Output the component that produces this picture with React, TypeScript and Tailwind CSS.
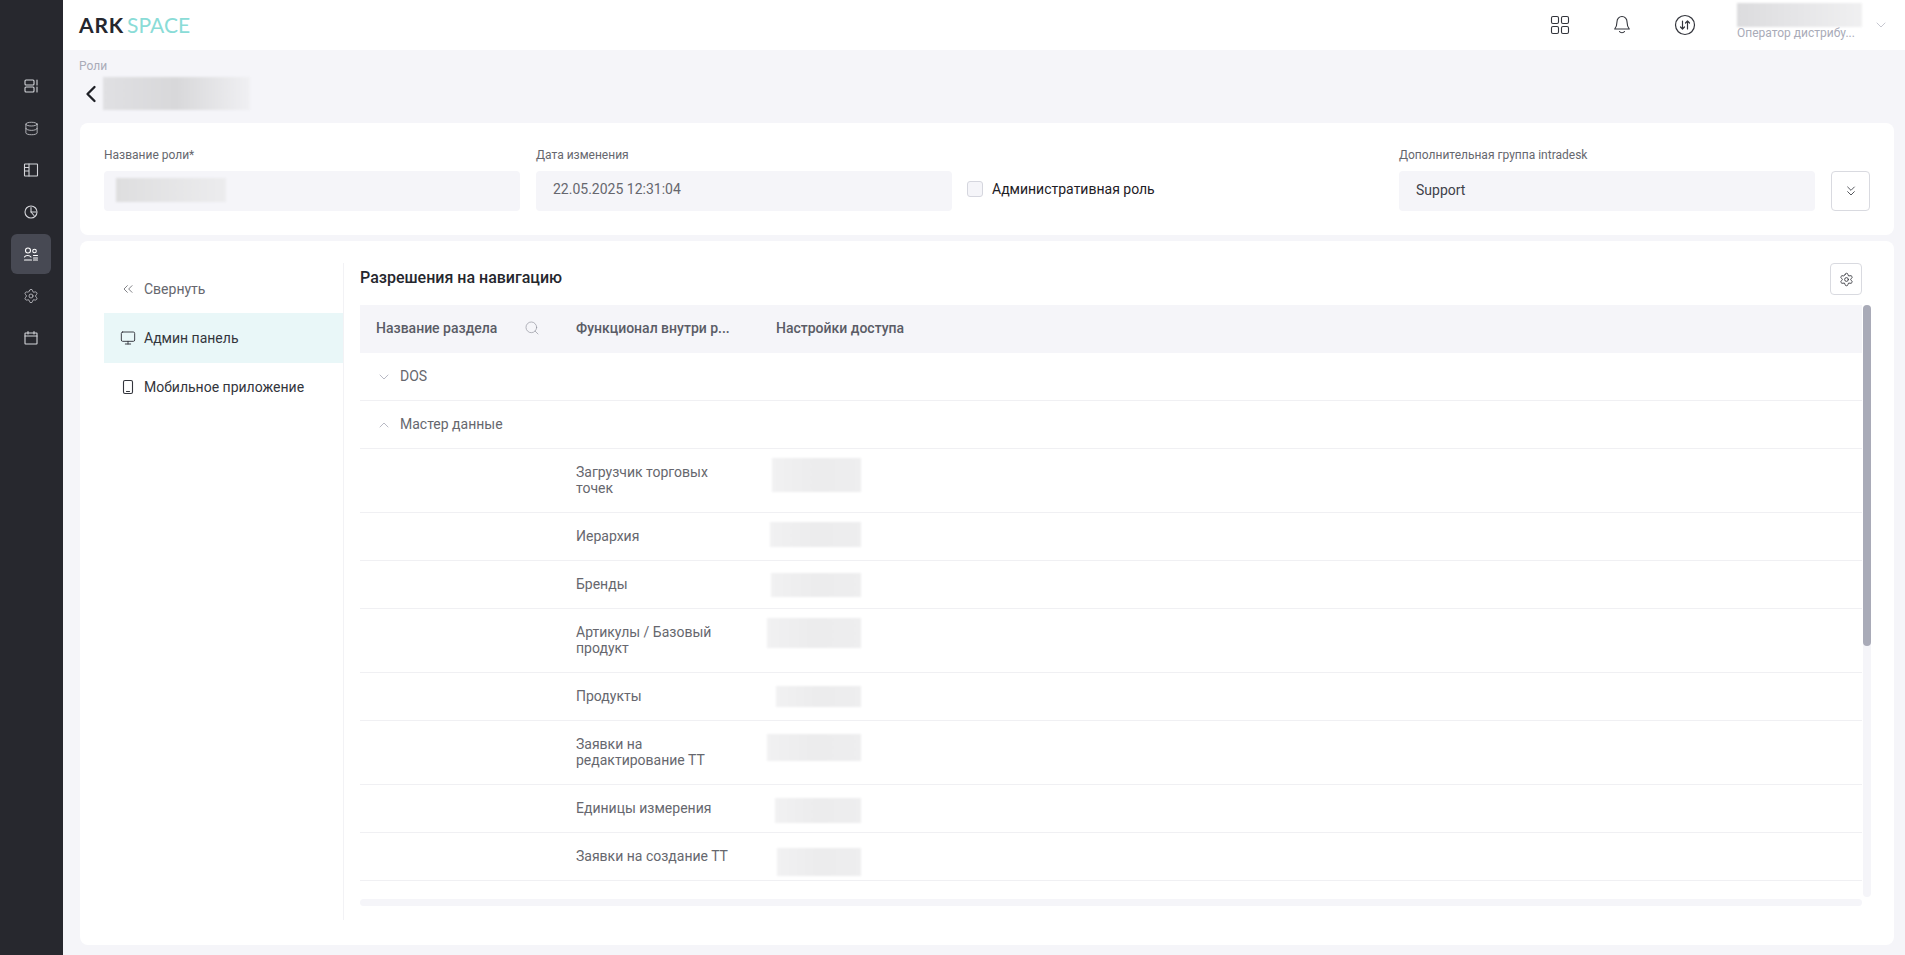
import {
  ChevronDown,
  ChevronLeft,
  ChevronUp,
  ChevronsDown,
  ChevronsLeft,
  Database,
  Monitor,
  Search,
  Settings,
} from "lucide-react";
import type { ReactNode } from "react";

const ROWS = [
  { label: "Загрузчик торговых точек", tall: true, blur: "w-[89px] h-[34px] mt-[9px]" },
  { label: "Иерархия", tall: false, blur: "w-[91px] h-[25px] mt-[9px]" },
  { label: "Бренды", tall: false, blur: "w-[90px] h-[24px] mt-[12px]" },
  { label: "Артикулы / Базовый продукт", tall: true, blur: "w-[94px] h-[30px] mt-[9px]" },
  { label: "Продукты", tall: false, blur: "w-[85px] h-[21px] mt-[13px]" },
  { label: "Заявки на редактирование ТТ", tall: true, blur: "w-[94px] h-[27px] mt-[13px]" },
  { label: "Единицы измерения", tall: false, blur: "w-[86px] h-[25px] mt-[13px]" },
  { label: "Заявки на создание ТТ", tall: false, blur: "w-[84px] h-[28px] mt-[15px]" },
];

function Glyph({ children, size = 16 }: { children: ReactNode; size?: number }) {
  return (
    <svg
      width={size}
      height={size}
      viewBox="0 0 16 16"
      fill="none"
      stroke="currentColor"
      strokeWidth="1.1"
      strokeLinecap="round"
      strokeLinejoin="round"
    >
      {children}
    </svg>
  );
}

function Sidebar() {
  return (
    <aside className="flex w-[63px] shrink-0 flex-col items-center bg-[#27282e] pr-px pt-[65px] text-[#d4d5da]">
      <div className="flex h-[42px] w-10 items-center justify-center">
        <Glyph>
          <rect x="2" y="2" width="9" height="5" rx="1" />
          <rect x="2" y="9" width="9" height="5" rx="1" />
          <path d="M14 2v5M14 9v5" />
        </Glyph>
      </div>
      <div className="flex h-[42px] w-10 items-center justify-center">
        <Database size={15} strokeWidth={1.25} />
      </div>
      <div className="flex h-[42px] w-10 items-center justify-center">
        <Glyph>
          <rect x="1.5" y="2" width="13" height="12" rx="0.5" />
          <path d="M6 2v12M1.5 5.5H6M1.5 9H6" />
        </Glyph>
      </div>
      <div className="flex h-[42px] w-10 items-center justify-center">
        <Glyph>
          <circle cx="8" cy="8" r="6" />
          <path d="M8 3.5V8h5" />
          <path d="M8 8l3 3.5" />
        </Glyph>
      </div>
      <div className="mt-px flex h-10 w-10 items-center justify-center rounded-md bg-[#474953] text-white">
        <Glyph>
          <circle cx="5" cy="4.5" r="2.5" />
          <circle cx="11.5" cy="5" r="1.8" />
          <path d="M1.5 11c1-2 5-2 6.5 0M1.5 14h7M10.5 9.5h4M10.5 12h4M10.5 14h4" />
        </Glyph>
      </div>
      <div className="mt-px flex h-[42px] w-10 items-center justify-center">
        <Settings size={16} strokeWidth={1.1} />
      </div>
      <div className="flex h-[42px] w-10 items-center justify-center">
        <Glyph>
          <rect x="2" y="3" width="12" height="11" rx="0.5" />
          <path d="M2 6h12M5 1.5V4M11 1.5V4" />
        </Glyph>
      </div>
    </aside>
  );
}

function Header() {
  return (
    <header className="flex h-[50px] shrink-0 items-center bg-white pl-4">
      <div className="mb-0.5 flex items-baseline text-[21px] leading-none">
        <span className="font-[Lato,sans-serif] font-bold tracking-[0.8px] text-[#25272e]">ARK</span>
        <span className="ml-[3px] font-[Lato,sans-serif] font-normal tracking-[0.1px] text-[#8adcd7]">SPACE</span>
      </div>
      <div className="ml-auto flex items-center text-[#33353c]">
        <svg width="20" height="20" viewBox="0 0 20 20" fill="none" stroke="currentColor" strokeWidth="1.1">
          <rect x="1.5" y="1.5" width="7" height="7" rx="1.5" />
          <rect x="11.5" y="1.5" width="7" height="7" rx="1.5" />
          <rect x="1.5" y="11.5" width="7" height="7" rx="1.5" />
          <rect x="11.5" y="11.5" width="7" height="7" rx="1.5" />
        </svg>
        <div className="ml-[42px]">
          <svg width="20" height="20" viewBox="0 0 20 20" fill="none" stroke="currentColor" strokeWidth="1.1" strokeLinecap="round" strokeLinejoin="round">
            <path d="M10 1.5c-3 0-5 2.4-5 5.3 0 3.6-.8 5.300-2.300 7.200h14.600C15.800 12.100 15 10.400 15 6.800c0-2.900-2-5.300-5-5.300z" />
            <path d="M7.500 16.500c1 1.600 4 1.600 5 0" />
          </svg>
        </div>
        <div className="ml-[42px]">
          <svg width="22" height="22" viewBox="0 0 22 22" fill="none" stroke="currentColor" strokeWidth="1.2" strokeLinecap="round" strokeLinejoin="round">
            <circle cx="11" cy="11" r="9.5" />
            <path d="M8.5 7v8M6.5 13l2 2 2-2M13.5 15V7M11.5 9l2-2 2 2" />
          </svg>
        </div>
        <div className="mb-2 ml-[41px] flex w-[125px] flex-col">
          <div className="h-6 w-[125px] bg-linear-to-r from-[#dcdcde] via-[#e6e6e8] to-[#f0f0f1] blur-[1px]" />
          <span className="whitespace-nowrap text-xs leading-3 text-[#a9abb8]">Оператор дистрибу...</span>
        </div>
        <ChevronDown size={16} strokeWidth={1} className="ml-[11px] mr-4 text-[#a9abb8]" />
      </div>
    </header>
  );
}

function Field({ label, children }: { label: string; children: ReactNode }) {
  return (
    <div className="min-w-0 flex-1">
      <div className="mb-2 h-4 text-xs leading-4 text-[#66676e]">{label}</div>
      <div className="flex h-10 items-center rounded bg-[#f5f5f9] px-4 text-sm">{children}</div>
    </div>
  );
}

function RoleCard() {
  return (
    <section className="mr-[11px] flex gap-4 rounded-lg bg-white p-6">
      <Field label="Название роли*">
        <div className="-ml-1 mb-0.5 h-6 w-[110px] bg-linear-to-r from-[#dededf] to-[#ececee] blur-[1px]" />
      </Field>
      <Field label="Дата изменения">
        <span className="mb-1 ml-px text-[#66676e]">22.05.2025 12:31:04</span>
      </Field>
      <div className="-ml-px flex min-w-0 flex-1 items-center gap-[9px] pt-5">
        <span className="h-4 w-4 rounded-[3px] border border-[#d5d6de] bg-[#f5f5f9]" />
        <span className="text-sm text-[#1e2026]">Административная роль</span>
      </div>
      <Field label="Дополнительная группа intradesk">
        <span className="mb-0.5 ml-px text-[#3f4149]">Support</span>
      </Field>
      <button
        type="button"
        className="mt-6 flex h-10 w-[39px] items-center justify-center rounded border border-[#d9dae0] text-[#33353c]"
      >
        <ChevronsDown size={16} strokeWidth={1.25} />
      </button>
    </section>
  );
}

function SectionNav() {
  return (
    <nav className="w-[240px] shrink-0 border-r border-[#f2f2f5] pt-px text-sm">
      <div className="flex h-[49px] items-center gap-2 px-4 text-[#66676e]">
        <ChevronsLeft size={16} strokeWidth={1.25} className="text-[#66676e]" />
        Свернуть
      </div>
      <div className="flex h-[50px] items-center gap-2 bg-[#e9f7f8] px-4 text-[#33353c]">
        <Monitor size={16} strokeWidth={1.4} />
        Админ панель
      </div>
      <div className="flex h-[47px] items-center gap-2 px-4 text-[#33353c]">
        <Glyph>
          <rect x="3.5" y="1.500" width="9" height="13" rx="1.500" />
          <path d="M6.500 12.500h3" />
        </Glyph>
        Мобильное приложение
      </div>
    </nav>
  );
}

function GroupRow({ label, open }: { label: string; open: boolean }) {
  return (
    <div className="flex h-12 items-center gap-2 border-b border-[#f0f0f3] pl-4 text-sm text-[#66676e]">
      {open ? (
        <ChevronUp size={16} strokeWidth={1.25} className="text-[#a9abb8]" />
      ) : (
        <ChevronDown size={16} strokeWidth={1.25} className="text-[#a9abb8]" />
      )}
      <span className="mb-0.5">{label}</span>
    </div>
  );
}

function PermissionsTable() {
  return (
    <div className="flex gap-px">
      <div className="min-w-0 flex-1">
        <div className="flex h-12 items-center bg-[#f5f5f9] pb-0.5 text-sm font-medium text-[#5a5c66]">
          <div className="flex w-[200px] items-center justify-between pl-4 pr-5">
            Название раздела
            <Search size={16} strokeWidth={1} className="text-[#8f919c]" />
          </div>
          <div className="w-[200px] whitespace-nowrap pl-4">Функционал внутри р...</div>
          <div className="pl-4">Настройки доступа</div>
        </div>
        <GroupRow label="DOS" open={false} />
        <GroupRow label="Мастер данные" open />
        {ROWS.map((row) => (
          <div
            key={row.label}
            className={row.tall ? "flex h-16 border-b border-[#f0f0f3]" : "flex h-12 border-b border-[#f0f0f3]"}
          >
            <div className="w-[200px]" />
            <div className="flex w-[200px] items-center px-4 pb-0.5 text-sm leading-4 text-[#66676e]">{row.label}</div>
            <div className="flex w-[101px] justify-end">
              <div className={`${row.blur} bg-linear-to-r from-[#f1f1f2] via-[#ececed] to-[#eeeeef] blur-[1px]`} />
            </div>
          </div>
        ))}
        <div className="mt-[18px] h-[7px] rounded-full bg-[#f5f5f9]" />
      </div>
      <div className="h-[592px] w-2 rounded-full bg-[#f5f5f9]">
        <div className="h-[341px] rounded-full bg-[#a9abb8]" />
      </div>
    </div>
  );
}

export default function App() {
  return (
    <div className="flex h-[955px] w-[1905px] overflow-hidden bg-[#f5f5f9] font-[Roboto,sans-serif]">
      <Sidebar />
      <div className="flex min-w-0 flex-1 flex-col">
        <Header />
        <main className="flex min-h-0 flex-1 flex-col pl-[17px]">
          <div className="-ml-px mt-[9px] h-[14px] text-xs leading-[14px] text-[#a9abb8]">Роли</div>
          <div className="mt-1 flex h-[33px] items-center">
            <ChevronLeft size={28} strokeWidth={2} className="-ml-[3px] text-[#1e2026]" />
            <div className="-ml-[2px] h-[33px] w-[147px] bg-linear-to-r from-[#e0e0e3] via-[#d8d8da] to-[#f0f0f3] blur-[1px]" />
          </div>
          <div className="mt-[13px]">
            <RoleCard />
          </div>
          <section className="mr-[11px] mt-[6px] flex h-[704px] rounded-lg bg-white pb-[25px] pl-6 pr-[23px] pt-[22px]">
            <SectionNav />
            <div className="min-w-0 flex-1 pl-4">
              <div className="flex h-[42px] items-start justify-between pr-[9px]">
                <h2 className="mt-1 text-base font-medium leading-[22px] text-[#25272e]">Разрешения на навигацию</h2>
                <button
                  type="button"
                  className="flex h-8 w-8 items-center justify-center rounded border border-[#d9dae0] text-[#33353c]"
                >
                  <Settings size={15} strokeWidth={1.4} />
                </button>
              </div>
              <PermissionsTable />
            </div>
          </section>
        </main>
      </div>
    </div>
  );
}
